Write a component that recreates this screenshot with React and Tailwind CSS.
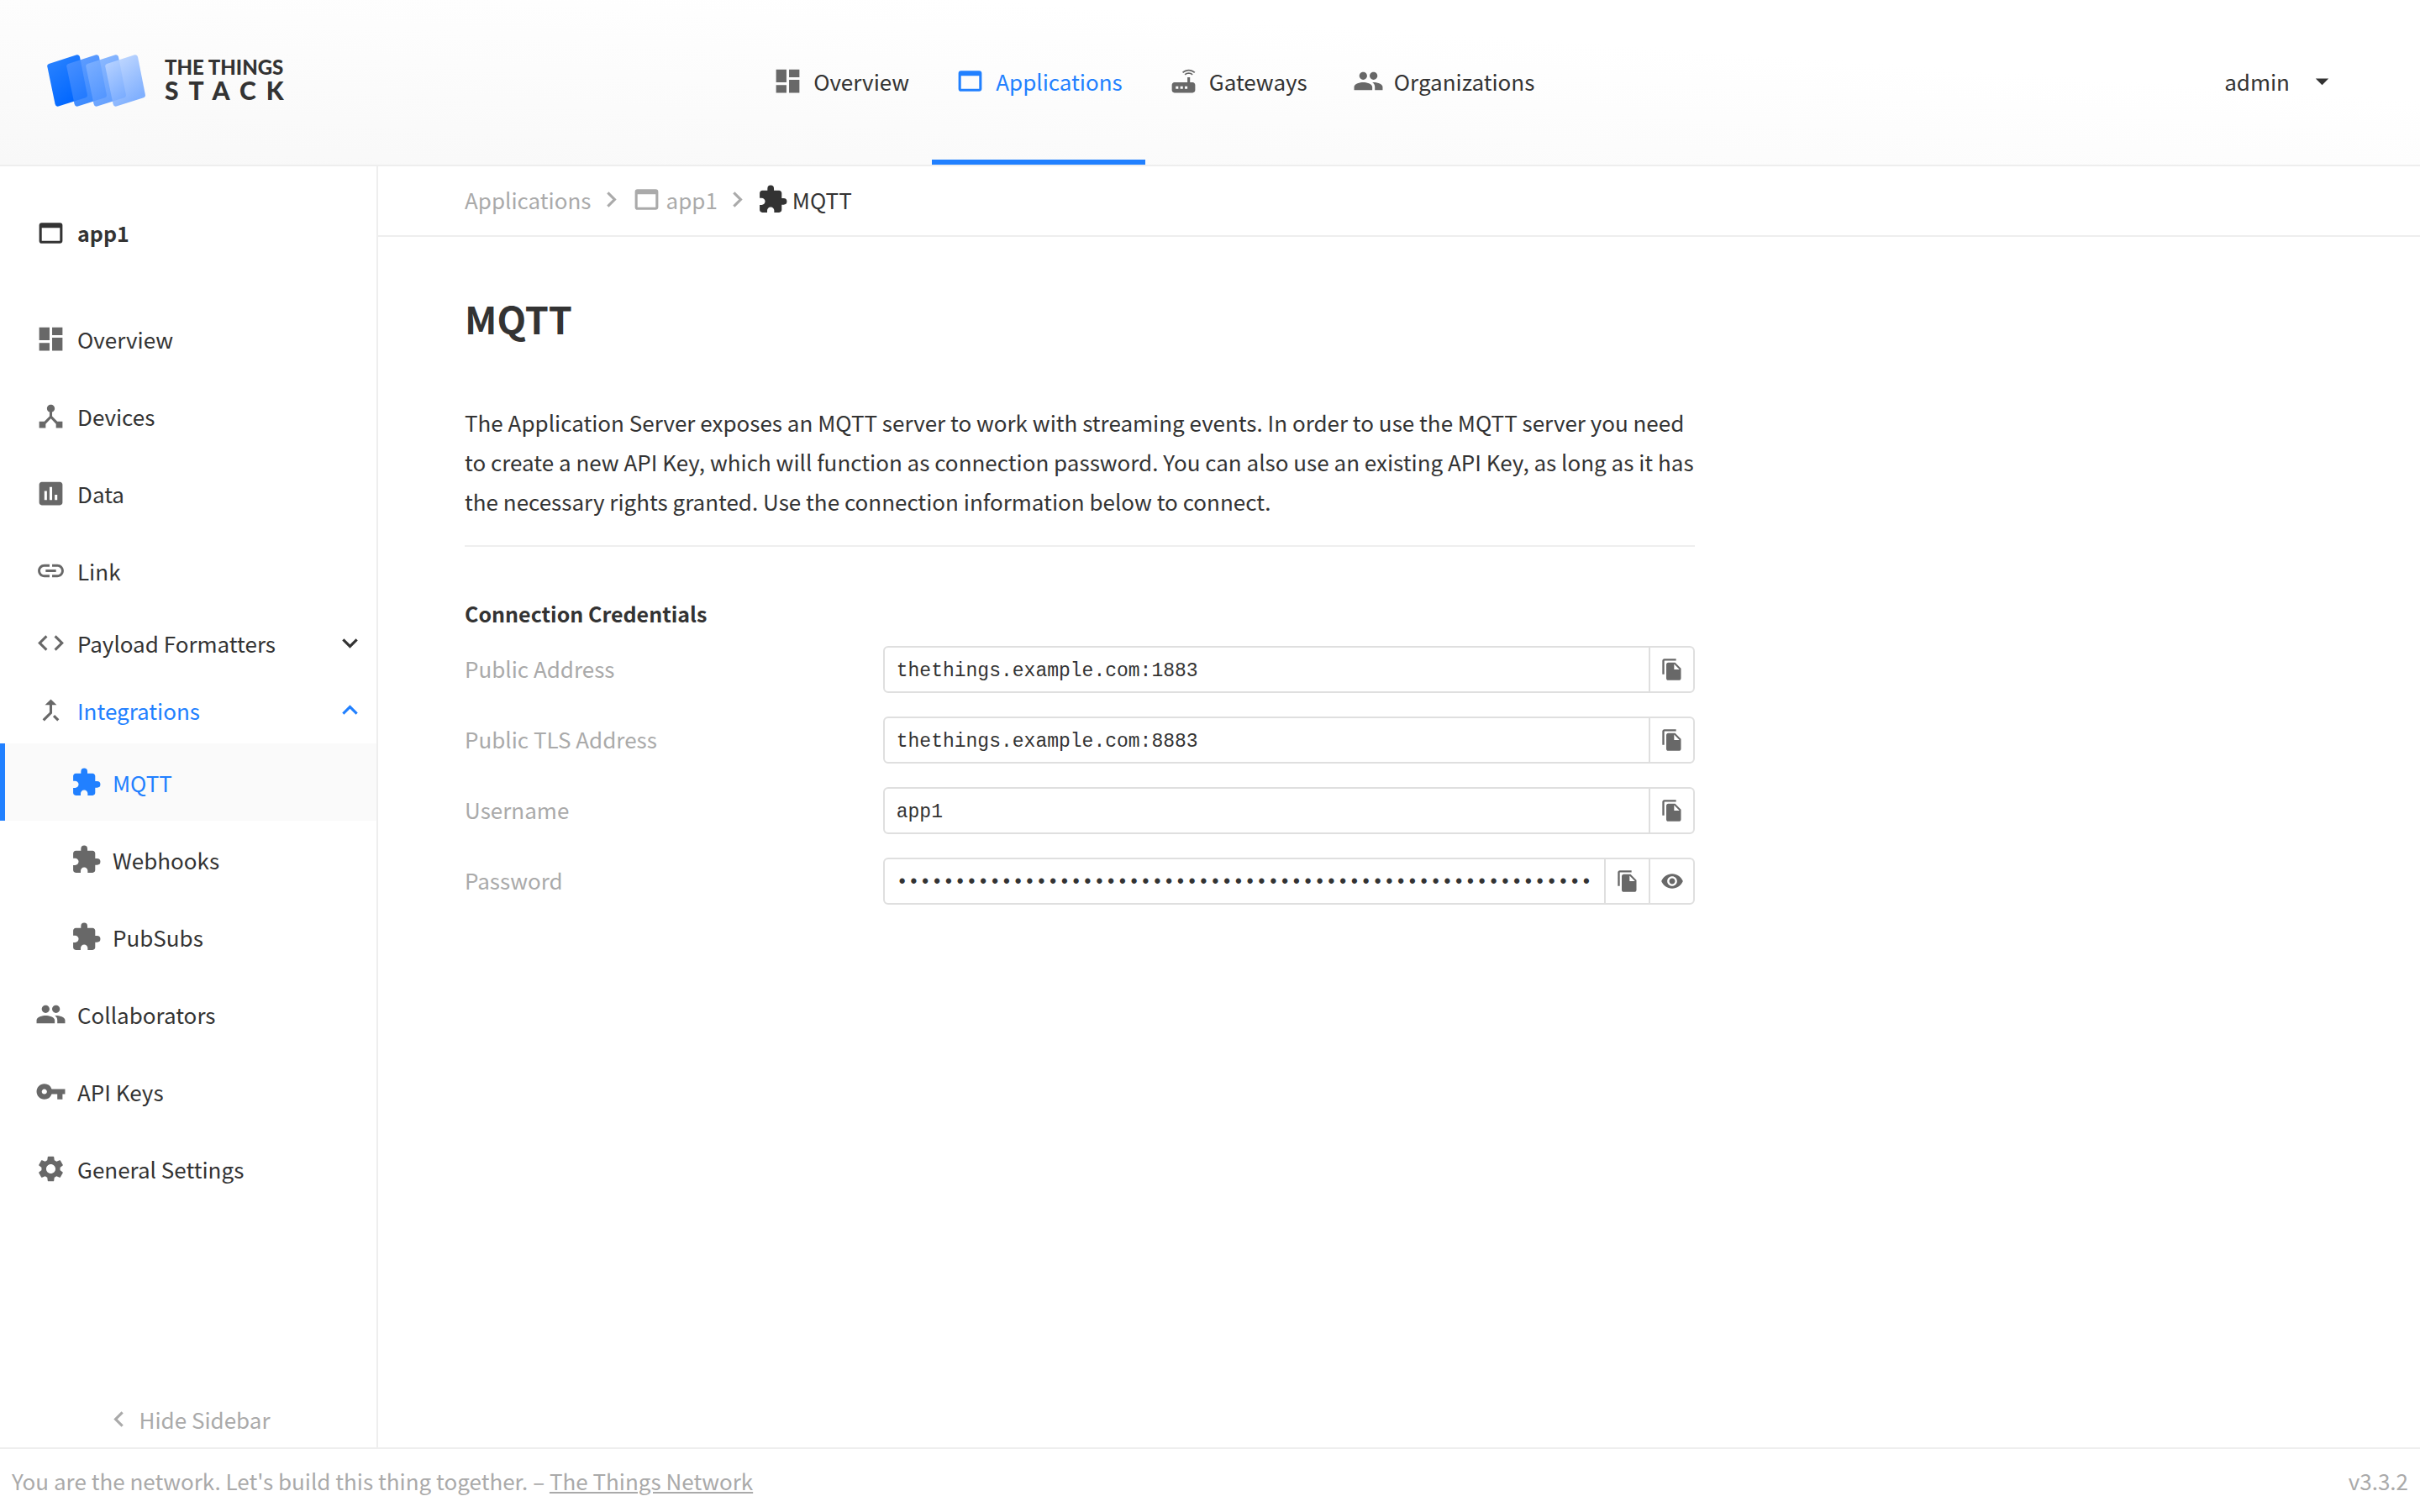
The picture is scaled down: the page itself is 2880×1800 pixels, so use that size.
import React, { useState } from "react";
import {
  MdDashboard,
  MdWebAsset,
  MdRouter,
  MdPeople,
  MdDeviceHub,
  MdAssessment,
  MdLink,
  MdCode,
  MdCallMerge,
  MdExtension,
  MdVpnKey,
  MdSettings,
  MdFileCopy,
  MdVisibility,
  MdKeyboardArrowDown,
  MdKeyboardArrowUp,
  MdKeyboardArrowLeft,
  MdKeyboardArrowRight,
  MdArrowDropDown,
} from "react-icons/md";

const ICON = "size-[37px] shrink-0";

const CARDS = [
  { dx: 0, from: "#2680ff", to: "#0066ff" },
  { dx: 23, from: "#4a90ff", to: "#1f79ff" },
  { dx: 46, from: "#7db0ff", to: "#4f93ff" },
  { dx: 69, from: "#b9d3ff", to: "#70a6ff" },
];

function Logo() {
  return (
    <a href="#home" aria-label="The Things Stack" className="flex items-center gap-[23px] pb-1">
      <svg viewBox="0 0 117 62" className="h-[62px] w-[117px]" aria-hidden="true">
        <defs>
          {CARDS.map((c, i) => (
            <linearGradient key={i} id={`card${i}`} x1="0.2" y1="0.1" x2="0.7" y2="0.9">
              <stop offset="0" stopColor={c.from} />
              <stop offset="1" stopColor={c.to} />
            </linearGradient>
          ))}
        </defs>
        {CARDS.map((c, i) => (
          <path
            key={i}
            transform={`translate(${c.dx} 0)`}
            fill={`url(#card${i})`}
            fillOpacity={i ? 0.88 : 1}
            d="M2.1 10.9 L35.3 .3 Q38.3 -.5 39 2.8 L47.9 47.8 Q48.4 50.4 46 51.2 L13.6 61.6 Q10.4 62.4 9.6 59 L.3 14.2 Q-.2 11.7 2.1 10.9Z"
          />
        ))}
      </svg>
      <span className="flex flex-col pb-1 font-[Lato] font-black text-[#333]">
        <span className="text-[24px] leading-[26px]">THE THINGS</span>
        <span className="text-[30px] leading-[28px] tracking-[0.4em]">STACK</span>
      </span>
    </a>
  );
}

const NAV = [
  { label: "Overview", Icon: MdDashboard },
  { label: "Applications", Icon: MdWebAsset, active: true },
  { label: "Gateways", Icon: MdRouter },
  { label: "Organizations", Icon: MdPeople },
];

function Header() {
  return (
    <header className="flex h-[198px] items-stretch justify-between border-b-2 border-[#eee] bg-[linear-gradient(184deg,#fff_30%,#f8f8f8_100%)] px-14">
      <Logo />
      <nav className="flex">
        {NAV.map(({ label, Icon, active }) => (
          <a
            key={label}
            href={`#${label}`}
            className={`flex items-center gap-3 border-b-[6px] px-[27px] pt-[3px] ${
              active ? "border-[#2180ff] text-[#2180ff]" : "border-transparent"
            }`}
          >
            <Icon className={`${ICON} ${active ? "" : "text-[#686868]"}`} />
            {label}
          </a>
        ))}
      </nav>
      <div className="flex w-[428px] items-center justify-end pb-[3px] pr-[42px]">
        <button type="button" className="flex items-center gap-5">
          admin
          <MdArrowDropDown className={ICON} />
        </button>
      </div>
    </header>
  );
}

function SideLink({ Icon, label, nested, active }) {
  return (
    <li>
      <a
        href={`#${label}`}
        className={`flex h-[92px] items-center gap-[13px] border-l-[6px] ${
          nested ? "pl-[78px]" : "pl-9"
        } ${active ? "border-[#2180ff] bg-[#fafafa] text-[#2180ff]" : "border-transparent"}`}
      >
        <Icon className={`${ICON} ${active ? "" : "text-[#686868]"}`} />
        {label}
      </a>
    </li>
  );
}

function SideGroup({ Icon, label, open, children }) {
  const Arrow = open ? MdKeyboardArrowUp : MdKeyboardArrowDown;
  return (
    <li>
      <button
        type="button"
        aria-expanded={!!open}
        className={`flex h-20 w-full items-center gap-[13px] pl-[42px] pr-[13px] ${open ? "text-[#2180ff]" : ""}`}
      >
        <Icon className={`${ICON} text-[#686868]`} />
        <span className="flex-1 text-left">{label}</span>
        <Arrow className={ICON} />
      </button>
      {children}
    </li>
  );
}

function Sidebar() {
  return (
    <aside className="flex w-[450px] shrink-0 flex-col border-r-2 border-[#eee]">
      <div className="flex h-[159px] items-center gap-[13px] pl-[42px] text-[25px] font-bold">
        <MdWebAsset className={ICON} />
        app1
      </div>
      <ul>
        <SideLink Icon={MdDashboard} label="Overview" />
        <SideLink Icon={MdDeviceHub} label="Devices" />
        <SideLink Icon={MdAssessment} label="Data" />
        <SideLink Icon={MdLink} label="Link" />
        <SideGroup Icon={MdCode} label="Payload Formatters" />
        <SideGroup Icon={MdCallMerge} label="Integrations" open>
          <ul>
            <SideLink Icon={MdExtension} label="MQTT" nested active />
            <SideLink Icon={MdExtension} label="Webhooks" nested />
            <SideLink Icon={MdExtension} label="PubSubs" nested />
          </ul>
        </SideGroup>
        <SideLink Icon={MdPeople} label="Collaborators" />
        <SideLink Icon={MdVpnKey} label="API Keys" />
        <SideLink Icon={MdSettings} label="General Settings" />
      </ul>
      <button
        type="button"
        className="mt-auto flex h-[68px] items-center justify-center gap-[6px] pr-1 text-[#aaa]"
      >
        <MdKeyboardArrowLeft className={ICON} />
        Hide Sidebar
      </button>
    </aside>
  );
}

function Breadcrumbs() {
  return (
    <nav
      aria-label="Breadcrumb"
      className="flex h-[84px] items-center gap-[5px] border-b-2 border-[#eee] px-[103px] pb-1 text-[#aaa]"
    >
      <a href="#applications">Applications</a>
      <MdKeyboardArrowRight className={ICON} />
      <a href="#app1" className="flex items-center gap-[5px]">
        <MdWebAsset className={ICON} />
        app1
      </a>
      <MdKeyboardArrowRight className={ICON} />
      <span className="flex items-center gap-[5px] text-[#333]">
        <MdExtension className={ICON} />
        MQTT
      </span>
    </nav>
  );
}

function Field({ id, label, value, secret }) {
  const [shown, setShown] = useState(false);
  const button = "flex w-[53px] items-center justify-center border-l-2 border-[#dfdfdf] text-[#686868]";
  return (
    <div className="mb-7 flex items-center">
      <label htmlFor={id} className="w-[34%] pb-1 text-[#aaa]">
        {label}
      </label>
      <div className="flex h-14 flex-1 rounded-md border-2 border-[#dfdfdf]">
        <input
          id={id}
          readOnly
          type={secret && !shown ? "password" : "text"}
          value={value}
          className="min-w-0 flex-1 pl-[14px] pt-1 font-['Liberation_Mono',monospace] text-[23px] outline-none"
        />
        <button type="button" aria-label={`Copy ${label}`} className={button}>
          <MdFileCopy className="size-7" />
        </button>
        {secret && (
          <button
            type="button"
            aria-label={`Show ${label}`}
            onClick={() => setShown(!shown)}
            className={button}
          >
            <MdVisibility className="size-7" />
          </button>
        )}
      </div>
    </div>
  );
}

export default function App() {
  return (
    <div className="flex min-h-screen flex-col bg-white font-['Noto_Sans_CJK_SC',sans-serif] text-[26px] leading-[47px] text-[#333]">
      <Header />
      <div className="flex flex-1">
        <Sidebar />
        <div className="min-w-0 flex-1">
          <Breadcrumbs />
          <main className="ml-[103px] mr-14 max-w-[1464px] pt-[61px]">
            <h1 className="text-[45px] font-bold leading-[72px]">MQTT</h1>
            <p className="mt-16 border-b-2 border-[#eee] pb-[29px]">
              The Application Server exposes an MQTT server to work with streaming events. In order to use
              the MQTT server you need to create a new API Key, which will function as connection password.
              You can also use an existing API Key, as long as it has the necessary rights granted. Use the
              connection information below to connect.
            </p>
            <h2 className="mb-[15px] mt-[56px] text-[25px] font-bold">Connection Credentials</h2>
            <Field id="address" label="Public Address" value="thethings.example.com:1883" />
            <Field id="tls" label="Public TLS Address" value="thethings.example.com:8883" />
            <Field id="username" label="Username" value="app1" />
            <Field id="password" label="Password" value={"x".repeat(60)} secret />
          </main>
        </div>
      </div>
      <footer className="flex h-[77px] items-center justify-between border-t-2 border-[#eee] px-[14px] text-[#aaa]">
        <span>
          You are the network. Let's build this thing together. –{" "}
          <a href="#network" className="underline">
            The Things Network
          </a>
        </span>
        <span>v3.3.2</span>
      </footer>
    </div>
  );
}
